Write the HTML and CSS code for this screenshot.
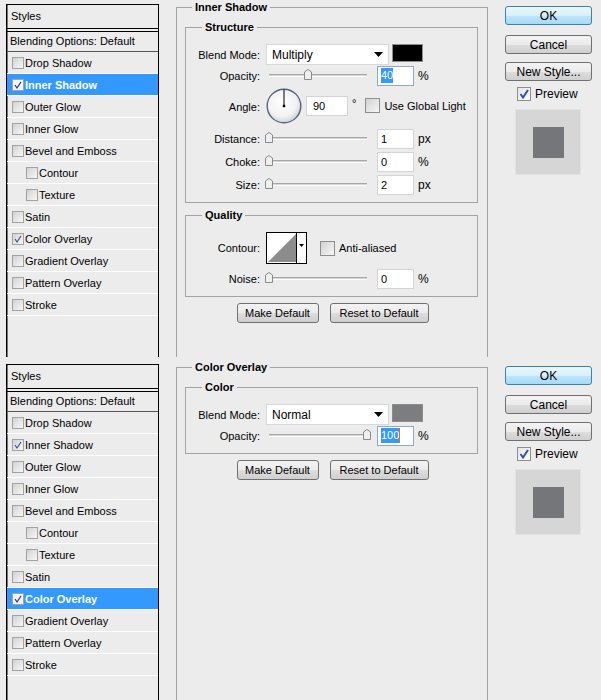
FILE: index.html
```html
<!DOCTYPE html>
<html lang="en">
<head>
    <meta charset="UTF-8">
    <title>Layer Style</title>
    <link rel="stylesheet" href="styles.css">
</head>
<body>
    <!-- Layer Style: Inner Shadow -->
    <div class="dialog">
        <div class="styles-list">
            <div class="list-head">Styles</div>
            <div class="list-blend">Blending Options: Default</div>
            <ul class="effects">
                <li><span class="cb"></span>Drop Shadow</li>
                <li class="selected"><span class="cb"><svg width="10" height="10" viewBox="0 0 10 10"><path d="M2 5 L4 8 L8 2" fill="none" stroke="#22338c" stroke-width="1.2"/></svg></span>Inner Shadow</li>
                <li><span class="cb"></span>Outer Glow</li>
                <li><span class="cb"></span>Inner Glow</li>
                <li><span class="cb"></span>Bevel and Emboss</li>
                <li class="sub"><span class="cb"></span>Contour</li>
                <li class="sub"><span class="cb"></span>Texture</li>
                <li><span class="cb"></span>Satin</li>
                <li><span class="cb"><svg width="10" height="10" viewBox="0 0 10 10"><path d="M2 5 L4 8 L8 2" fill="none" stroke="#3a4a9a" stroke-width="1.1"/></svg></span>Color Overlay</li>
                <li><span class="cb"></span>Gradient Overlay</li>
                <li><span class="cb"></span>Pattern Overlay</li>
                <li><span class="cb"></span>Stroke</li>
            </ul>
        </div>

        <fieldset class="effect">
            <legend>Inner Shadow</legend>
            <fieldset class="section">
                <legend>Structure</legend>
                <div class="row">
                    <span class="name">Blend Mode:</span>
                    <div class="select">Multiply<svg width="9" height="5" viewBox="0 0 9 5"><path d="M0 0 H9 L4.5 5 Z" fill="#000"/></svg></div>
                    <div class="swatch black"></div>
                </div>
                <div class="row">
                    <span class="name">Opacity:</span>
                    <div class="slider"><svg class="thumb" style="left: 40%" width="8" height="11" viewBox="0 0 8 11"><path d="M0.5 3 L4 0.5 L7.5 3 V10.5 H0.5 Z" fill="#efefef" stroke="#8a8a8a"/></svg></div>
                    <span class="num focus"><span class="sel">40</span></span>
                    <span class="unit">%</span>
                </div>
                <div class="row angle">
                    <span class="name">Angle:</span>
                    <svg class="dial" width="36" height="36" viewBox="0 0 36 36">
                        <defs>
                            <radialGradient id="dial-fill" cx="0.45" cy="0.4" r="0.6">
                                <stop offset="0" stop-color="#ffffff"/>
                                <stop offset="0.7" stop-color="#f2f2f2"/>
                                <stop offset="1" stop-color="#cfd2d8"/>
                            </radialGradient>
                        </defs>
                        <circle cx="18" cy="18" r="16.8" fill="url(#dial-fill)" stroke="#56627c" stroke-width="1.4"/>
                        <line x1="18" y1="18" x2="18" y2="1.5" stroke="#000" stroke-width="1"/>
                        <rect x="16.8" y="16.8" width="2.4" height="2.4" fill="#000"/>
                    </svg>
                    <span class="num angle-num">90</span>
                    <span class="deg">°</span>
                    <span class="cb big"></span>
                    <span class="check-label">Use Global Light</span>
                </div>
                <div class="row spaced">
                    <span class="name">Distance:</span>
                    <div class="slider"><svg class="thumb" style="left: 0%" width="8" height="11" viewBox="0 0 8 11"><path d="M0.5 3 L4 0.5 L7.5 3 V10.5 H0.5 Z" fill="#efefef" stroke="#8a8a8a"/></svg></div>
                    <span class="num">1</span>
                    <span class="unit">px</span>
                </div>
                <div class="row next">
                    <span class="name">Choke:</span>
                    <div class="slider"><svg class="thumb" style="left: 0%" width="8" height="11" viewBox="0 0 8 11"><path d="M0.5 3 L4 0.5 L7.5 3 V10.5 H0.5 Z" fill="#efefef" stroke="#8a8a8a"/></svg></div>
                    <span class="num">0</span>
                    <span class="unit">%</span>
                </div>
                <div class="row next">
                    <span class="name">Size:</span>
                    <div class="slider"><svg class="thumb" style="left: 0%" width="8" height="11" viewBox="0 0 8 11"><path d="M0.5 3 L4 0.5 L7.5 3 V10.5 H0.5 Z" fill="#efefef" stroke="#8a8a8a"/></svg></div>
                    <span class="num">2</span>
                    <span class="unit">px</span>
                </div>
            </fieldset>

            <fieldset class="section quality">
                <legend>Quality</legend>
                <div class="row contour-row">
                    <span class="name">Contour:</span>
                    <svg class="contour" width="41" height="32" viewBox="0 0 41 32">
                        <rect x="0.5" y="0.5" width="40" height="31" fill="#fff" stroke="#000"/>
                        <path d="M2 30 L30 2 V30 Z" fill="#8c8c8c"/>
                        <line x1="30.5" y1="1" x2="30.5" y2="31" stroke="#000"/>
                        <path d="M33 12 H38 L35.5 15 Z" fill="#000"/>
                    </svg>
                    <span class="cb big aa"></span>
                    <span class="check-label">Anti-aliased</span>
                </div>
                <div class="row noise">
                    <span class="name">Noise:</span>
                    <div class="slider"><svg class="thumb" style="left: 0%" width="8" height="11" viewBox="0 0 8 11"><path d="M0.5 3 L4 0.5 L7.5 3 V10.5 H0.5 Z" fill="#efefef" stroke="#8a8a8a"/></svg></div>
                    <span class="num">0</span>
                    <span class="unit">%</span>
                </div>
            </fieldset>

            <div class="defaults">
                <button class="btn make">Make Default</button>
                <button class="btn reset">Reset to Default</button>
            </div>
        </fieldset>

        <div class="actions">
            <button class="btn side ok">OK</button>
            <button class="btn side cancel">Cancel</button>
            <button class="btn side new-style">New Style...</button>
            <div class="preview-check">
                <span class="cb preview"><svg width="12" height="12" viewBox="0 0 12 12"><path d="M2.5 6 L5 9.5 L10 2" fill="none" stroke="#2c4fc4" stroke-width="2"/></svg></span>
                <span>Preview</span>
            </div>
            <div class="preview-box"><div class="preview-square"></div></div>
        </div>
    </div>

    <!-- Layer Style: Color Overlay -->
    <div class="dialog">
        <div class="styles-list">
            <div class="list-head">Styles</div>
            <div class="list-blend">Blending Options: Default</div>
            <ul class="effects">
                <li><span class="cb"></span>Drop Shadow</li>
                <li><span class="cb"><svg width="10" height="10" viewBox="0 0 10 10"><path d="M2 5 L4 8 L8 2" fill="none" stroke="#3a4a9a" stroke-width="1.1"/></svg></span>Inner Shadow</li>
                <li><span class="cb"></span>Outer Glow</li>
                <li><span class="cb"></span>Inner Glow</li>
                <li><span class="cb"></span>Bevel and Emboss</li>
                <li class="sub"><span class="cb"></span>Contour</li>
                <li class="sub"><span class="cb"></span>Texture</li>
                <li><span class="cb"></span>Satin</li>
                <li class="selected"><span class="cb"><svg width="10" height="10" viewBox="0 0 10 10"><path d="M2 5 L4 8 L8 2" fill="none" stroke="#22338c" stroke-width="1.2"/></svg></span>Color Overlay</li>
                <li><span class="cb"></span>Gradient Overlay</li>
                <li><span class="cb"></span>Pattern Overlay</li>
                <li><span class="cb"></span>Stroke</li>
            </ul>
        </div>

        <fieldset class="effect">
            <legend>Color Overlay</legend>
            <fieldset class="section">
                <legend>Color</legend>
                <div class="row">
                    <span class="name">Blend Mode:</span>
                    <div class="select">Normal<svg width="9" height="5" viewBox="0 0 9 5"><path d="M0 0 H9 L4.5 5 Z" fill="#000"/></svg></div>
                    <div class="swatch grey"></div>
                </div>
                <div class="row">
                    <span class="name">Opacity:</span>
                    <div class="slider"><svg class="thumb" style="left: 100%" width="8" height="11" viewBox="0 0 8 11"><path d="M0.5 3 L4 0.5 L7.5 3 V10.5 H0.5 Z" fill="#efefef" stroke="#8a8a8a"/></svg></div>
                    <span class="num focus"><span class="sel">100</span><span class="caret"></span></span>
                    <span class="unit">%</span>
                </div>
            </fieldset>

            <div class="defaults">
                <button class="btn make">Make Default</button>
                <button class="btn reset">Reset to Default</button>
            </div>
        </fieldset>

        <div class="actions">
            <button class="btn side ok">OK</button>
            <button class="btn side cancel">Cancel</button>
            <button class="btn side new-style">New Style...</button>
            <div class="preview-check">
                <span class="cb preview"><svg width="12" height="12" viewBox="0 0 12 12"><path d="M2.5 6 L5 9.5 L10 2" fill="none" stroke="#2c4fc4" stroke-width="2"/></svg></span>
                <span>Preview</span>
            </div>
            <div class="preview-box"><div class="preview-square"></div></div>
        </div>
    </div>
</body>
</html>
```

FILE: styles.css
```css
body {
    margin: 0;
    background-color: #ececec;
    color: #000;
    font-family: "Liberation Sans", Arial, sans-serif;
    font-size: 11px;
}
.dialog {
    display: flex;
    align-items: flex-start;
    height: 357px;
    margin-bottom: 3px;
    overflow: hidden;
}

/* left column: list of effects */
.styles-list {
    flex: none;
    width: 151px;
    height: 420px;
    margin: 4px 0 0 6px;
    border: 1px solid #000;
    box-shadow: inset 1px 0 0 #777;
}
.list-head {
    height: 23px;
    line-height: 23px;
    padding-left: 4px;
    border-bottom: 1px solid #000;
}
.list-blend {
    height: 19px;
    line-height: 19px;
    margin-top: 2px;
    padding-left: 3px;
    border-top: 1px solid #000;
    border-bottom: 1px solid #555;
}
.effects {
    list-style: none;
    margin: 0;
    padding: 0;
}
.effects li {
    display: flex;
    align-items: center;
    height: 21px;
    padding-left: 5px;
    border-bottom: 1px solid #fff;
}
.effects li.sub {
    padding-left: 19px;
}
.effects li.selected {
    background-color: #3399ff;
    color: #fff;
    font-weight: bold;
}
.effects li.selected .cb {
    background: #f4f4f4;
}

/* checkboxes */
.cb {
    flex: none;
    display: flex;
    align-items: center;
    justify-content: center;
    width: 10px;
    height: 10px;
    margin-right: 1px;
    border: 1px solid #a2a2a2;
    background: linear-gradient(135deg, #d2d2d2, #f7f7f7);
}
.cb.big {
    width: 13px;
    height: 13px;
    margin-left: 9px;
    border-color: #8e8e8e;
}
.cb.aa {
    margin-left: 13px;
}
.check-label {
    margin-left: 3px;
}

/* middle column: group boxes */
.effect {
    flex: none;
    box-sizing: border-box;
    width: 312px;
    height: 420px;
    margin: 0 0 0 17px;
    padding: 5px 9px 0 8px;
    border: 1px solid #a3a3a3;
    min-width: 0;
}
.effect legend,
.section legend {
    padding: 0 3px;
    line-height: 15px;
    font-weight: bold;
}
.effect > legend {
    margin-left: 7px;
}
.section {
    margin: 0;
    padding: 9px 0 7px 0;
    border: 1px solid #a3a3a3;
    min-width: 0;
}
.section > legend {
    margin-left: 16px;
}
.section.quality {
    margin-top: 5px;
}

.row {
    display: flex;
    align-items: center;
    height: 21px;
}
.row.angle {
    height: 37px;
    margin-top: 1px;
}
.row.spaced {
    margin-top: 4px;
}
.row.next {
    margin-top: 2px;
}
.row.contour-row {
    height: 32px;
}
.row.noise {
    margin-top: 4px;
}
.name {
    flex: none;
    width: 74px;
    margin-right: 6px;
    text-align: right;
}
.row.angle .name {
    margin-top: 3px;
}

.select {
    box-sizing: border-box;
    display: flex;
    align-items: center;
    justify-content: space-between;
    width: 123px;
    height: 21px;
    padding: 0 5px 0 5px;
    border: 1px solid #d8d8d8;
    background: #fff;
    font-size: 12px;
}
.swatch {
    align-self: flex-start;
    box-sizing: border-box;
    width: 31px;
    height: 18px;
    margin-left: 3px;
    border: 1px solid #8c8c8c;
}
.swatch.black {
    background: #000;
}
.swatch.grey {
    background: #7b7d7f;
}

.slider {
    position: relative;
    width: 98px;
    height: 1px;
    margin: 0 3px;
    border-top: 1px solid #a6a6a6;
    border-bottom: 1px solid #fff;
    background: #d6d6d6;
}
.thumb {
    position: absolute;
    top: -6px;
    margin-left: -4px;
}

.num {
    box-sizing: border-box;
    display: flex;
    align-items: center;
    width: 37px;
    height: 20px;
    margin-left: 7px;
    padding-left: 3px;
    border: 1px solid #d4d4d4;
    background: #fff;
}
.num.focus {
    border-color: #8fa8c8;
}
.num.angle-num {
    width: 42px;
    margin-left: 4px;
    padding-left: 6px;
}
.sel {
    background: #3399ff;
    color: #fff;
    line-height: 15px;
}
.caret {
    display: inline-block;
    width: 1px;
    height: 15px;
    background: #d8721c;
}
.unit {
    margin-left: 4px;
    font-size: 12px;
}
.deg {
    margin-left: 4px;
    align-self: flex-start;
    margin-top: 10px;
}
.dial {
    flex: none;
}
.contour {
    flex: none;
}

.defaults {
    display: flex;
    justify-content: center;
    gap: 11px;
    margin-top: 6px;
    padding-left: 2px;
}
.btn {
    box-sizing: border-box;
    height: 20px;
    padding: 0;
    border: 1px solid #707070;
    border-radius: 3px;
    background: linear-gradient(#f3f3f3 0%, #ebebeb 50%, #dddddd 51%, #cfcfcf 100%);
    color: #000;
    font-family: inherit;
    font-size: 11px;
}
.btn.make {
    width: 82px;
}
.btn.reset {
    width: 99px;
}

/* right column */
.actions {
    flex: none;
    display: flex;
    flex-direction: column;
    width: 87px;
    margin-left: 17px;
    padding-top: 6px;
}
.btn.side {
    width: 87px;
    height: 19px;
    font-size: 12px;
}
.btn.ok {
    border-color: #3c7fb1;
    background: linear-gradient(#eaf6fd 0%, #d9f0fc 50%, #bee6fd 51%, #a7d9f5 100%);
}
.btn.cancel {
    margin-top: 10px;
}
.btn.new-style {
    margin-top: 8px;
}
.preview-check {
    display: flex;
    align-items: center;
    margin: 6px 0 0 12px;
    font-size: 12px;
}
.cb.preview {
    width: 12px;
    height: 12px;
    margin-right: 4px;
    border-color: #8e8e8e;
    background: linear-gradient(135deg, #e4e4e4, #fff);
}
.preview-box {
    display: flex;
    align-items: center;
    justify-content: center;
    box-sizing: border-box;
    width: 66px;
    height: 66px;
    margin: 8px 0 0 10px;
    border: 1px solid #e2e2e2;
    background: #d6d6d6;
}
.preview-square {
    width: 31px;
    height: 31px;
    background: #747679;
}
```
